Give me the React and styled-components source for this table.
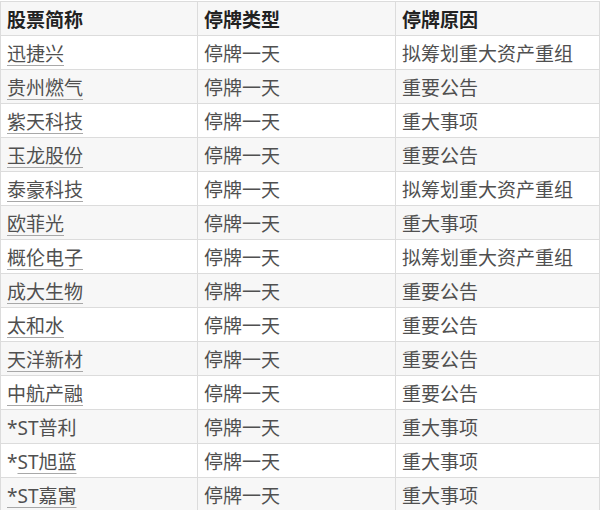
import React from 'react';
import styled, {createGlobalStyle} from 'styled-components';

const GlobalStyle = createGlobalStyle`
    body {
        margin: 0;
        background: #fff;
        font-family: "Noto Sans", "Noto Sans CJK SC", sans-serif;
    }
`;

const Table = styled.table`
    margin-top: 1px;
    width: 600px;
    border-collapse: collapse;
    table-layout: fixed;
    font-size: 19px;
    color: #505050;
`;

const HeadCell = styled.th`
    height: 33px;
    padding: 0 6px;
    text-align: left;
    font-weight: 700;
    color: #222;
    background: #f7f7f7;
    border: 1px solid #dcdcdc;
`;

const Row = styled.tr`
    background: ${props => props.striped ? '#f7f7f7' : '#fff'};
`;

const Cell = styled.td`
    height: 33px;
    padding: 0 6px;
    border: 1px solid #dcdcdc;
    white-space: nowrap;
`;

const StockLink = styled.span`
    text-decoration: underline;
    text-decoration-color: #a8a8a8;
    text-underline-offset: 4px;
    text-decoration-thickness: 1px;
`;

// prefix: text before the link, link: underlined part, plain: no link at all
const rows = [
    {link: '迅捷兴', reason: '拟筹划重大资产重组'},
    {link: '贵州燃气', reason: '重要公告'},
    {link: '紫天科技', reason: '重大事项'},
    {link: '玉龙股份', reason: '重要公告'},
    {link: '泰豪科技', reason: '拟筹划重大资产重组'},
    {link: '欧菲光', reason: '重大事项'},
    {link: '概伦电子', reason: '拟筹划重大资产重组'},
    {link: '成大生物', reason: '重要公告'},
    {link: '太和水', reason: '重要公告'},
    {link: '天洋新材', reason: '重要公告'},
    {link: '中航产融', reason: '重要公告'},
    {plain: '*ST普利', reason: '重大事项'},
    {prefix: '*', link: 'ST旭蓝', reason: '重大事项'},
    {link: '*ST嘉寓', reason: '重大事项'},
];

const Name = ({row}) => {
    if (row.plain) return row.plain;
    return (
        <>
            {row.prefix}
            <StockLink>{row.link}</StockLink>
        </>
    );
};

export default function App() {
    return (
        <>
            <GlobalStyle/>
            <Table>
                <colgroup>
                    <col style={{width: 197}}/>
                    <col style={{width: 198}}/>
                    <col/>
                </colgroup>
                <thead>
                <tr>
                    <HeadCell>股票简称</HeadCell>
                    <HeadCell>停牌类型</HeadCell>
                    <HeadCell>停牌原因</HeadCell>
                </tr>
                </thead>
                <tbody>
                {rows.map((row, i) => (
                    <Row key={i} striped={i % 2 === 1}>
                        <Cell><Name row={row}/></Cell>
                        <Cell>停牌一天</Cell>
                        <Cell>{row.reason}</Cell>
                    </Row>
                ))}
                </tbody>
            </Table>
        </>
    );
}
